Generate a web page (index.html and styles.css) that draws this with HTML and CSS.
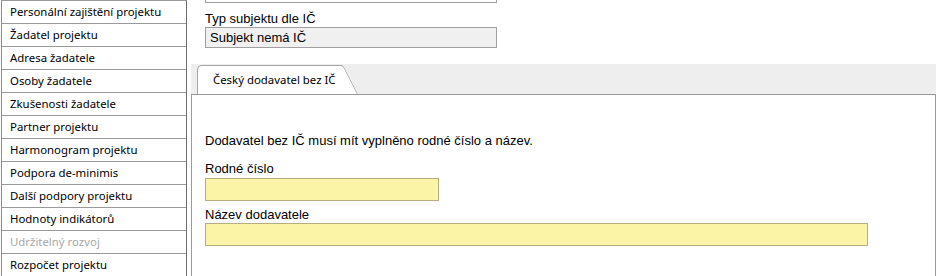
FILE: index.html
```html
<!DOCTYPE html>
<html lang="cs">
<head>
<meta charset="utf-8">
<title>Dodavatel</title>
<link rel="stylesheet" href="styles.css">
</head>
<body>
<div class="page">
  <nav class="sidebar">
    <div class="nav-item">Personální zajištění projektu</div>
    <div class="nav-item">Žadatel projektu</div>
    <div class="nav-item">Adresa žadatele</div>
    <div class="nav-item">Osoby žadatele</div>
    <div class="nav-item">Zkušenosti žadatele</div>
    <div class="nav-item">Partner projektu</div>
    <div class="nav-item">Harmonogram projektu</div>
    <div class="nav-item">Podpora de-minimis</div>
    <div class="nav-item">Další podpory projektu</div>
    <div class="nav-item">Hodnoty indikátorů</div>
    <div class="nav-item disabled">Udržitelný rozvoj</div>
    <div class="nav-item">Rozpočet projektu</div>
  </nav>
  <main class="content">
    <div class="field-wrap">
      <div class="ro-field cut"></div>
      <div class="label">Typ subjektu dle IČ</div>
      <div class="ro-field">Subjekt nemá IČ</div>
    </div>
    <div class="tabs">
      <div class="tab-strip">
        <div class="tab"><span class="tab-text">Český dodavatel bez IČ</span></div>
      </div>
      <div class="panel">
        <p class="info">Dodavatel bez IČ musí mít vyplněno rodné číslo a název.</p>
        <div class="label">Rodné číslo</div>
        <div class="input short"></div>
        <div class="label second">Název dodavatele</div>
        <div class="input long"></div>
      </div>
    </div>
  </main>
</div>
</body>
</html>
```
FILE: styles.css
```css
html, body {
  margin: 0;
  padding: 0;
  background: #fff;
}
body {
  width: 952px;
  height: 276px;
  overflow: hidden;
}
.page {
  display: flex;
  align-items: flex-start;
  height: 276px;
  overflow: hidden;
}
.sidebar {
  margin-left: 1px;
  width: 184px;
  height: 275px;
  overflow: hidden;
  border-left: 1px solid #8c8c8c;
  border-right: 1px solid #6e6e6e;
  border-top: 1px solid #9a9a9a;
  font-family: "Noto Sans", "Open Sans", sans-serif;
  font-size: 11.4px;
  color: #000;
}
.nav-item {
  height: 22px;
  line-height: 22px;
  padding-left: 8px;
  border-bottom: 1px solid #9a9a9a;
  white-space: nowrap;
  overflow: hidden;
}
.nav-item.disabled {
  color: #a8a8a8;
}
.content {
  flex: 1;
  font-family: "Liberation Sans", Arial, sans-serif;
  font-size: 13px;
  color: #000;
}
.field-wrap {
  padding-left: 18px;
}
.ro-field {
  width: 286px;
  height: 19px;
  line-height: 19px;
  border: 1px solid #a0a0a0;
  background: #f0f0f0;
  padding-left: 4px;
  box-sizing: content-box;
  white-space: nowrap;
}
.ro-field.cut {
  margin-top: -18px;
  background: #fff;
}
.label {
  height: 15px;
  line-height: 15px;
  margin-top: 8px;
  margin-bottom: 1px;
}
.tabs {
  margin-left: 4px;
  margin-top: 16px;
  width: 745px;
}
.tab-strip {
  height: 30px;
  background: #eeeeee;
  display: flex;
  align-items: flex-end;
  padding-left: 6px;
}
.tab {
  position: relative;
  z-index: 0;
  height: 29px;
  width: 145px;
  margin-right: 16px;
  box-sizing: border-box;
  background: #fff;
  border-left: 1px solid #a5a5a5;
  border-top: 1px solid #a5a5a5;
  border-top-left-radius: 5px;
  font-family: "Noto Sans", "Open Sans", sans-serif;
  font-size: 11.4px;
  line-height: 27px;
  padding-left: 15px;
  white-space: nowrap;
}
.tab::after {
  content: "";
  position: absolute;
  z-index: -1;
  top: -1px;
  right: -16px;
  width: 24px;
  bottom: 0;
  background: #fff;
  border-top: 1px solid #a5a5a5;
  border-right: 1px solid #a5a5a5;
  border-top-right-radius: 3px;
  transform: skewX(27deg);
  transform-origin: bottom right;
}
.tab-text {
  position: relative;
}
.panel {
  border-top: 1px solid #9a9a9a;
  border-left: 1px solid #9a9a9a;
  border-right: 1px solid #9a9a9a;
  height: 190px;
  padding-left: 13px;
}
.info {
  margin: 38px 0 0 0;
  line-height: 15px;
}
.panel .label {
  margin-top: 13px;
  margin-bottom: 2px;
}
.panel .label.second {
  margin-top: 6px;
  margin-bottom: 1px;
}
.input {
  height: 21px;
  border: 1px solid #b5ae84;
  background: #fbf3a6;
}
.input.short {
  width: 232px;
}
.input.long {
  width: 661px;
}
```
